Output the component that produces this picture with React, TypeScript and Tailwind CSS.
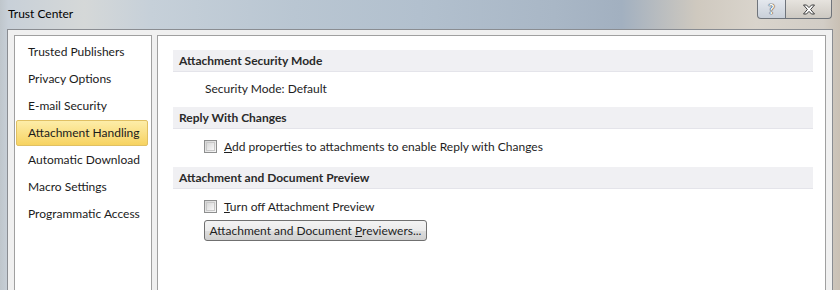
import React from "react";

const font = { fontFamily: "Lato, 'Noto Sans', 'Liberation Sans', sans-serif" };

function NavItem({ label, selected }: { label: string; selected?: boolean }) {
  return (
    <div
      className={
        "ml-[1px] mb-[1px] h-[26px] w-[132px] flex items-center pl-[11px] text-[12px] text-[#1b1b1b] rounded-[2px] border " +
        (selected
          ? "border-[#e0c063] bg-gradient-to-b from-[#fdeda8] to-[#f7d360]"
          : "border-transparent")
      }
    >
      {label}
    </div>
  );
}

function Bar({ title }: { title: string }) {
  return (
    <div className="h-[22px] bg-[#f0f0f3] border-b border-[#e4e4ea] flex items-center pl-[6px] text-[12px] font-bold text-[#2a2a2a]">
      {title}
    </div>
  );
}

function Checkbox() {
  return (
    <div className="w-[13px] h-[13px] border border-[#8e8f8f] bg-gradient-to-br from-[#d6d6d6] to-[#f6f6f6] p-[1px]">
      <div className="w-full h-full border border-[#c8c8c8] bg-gradient-to-br from-[#d8d8d8] to-[#f8f8f8]" />
    </div>
  );
}

export default function App() {
  return (
    <div
      className="w-[840px] h-[290px] overflow-hidden flex flex-col bg-[linear-gradient(90deg,#bfc6cc_0%,#c8d0d8_1%,#d5d8d8_10%,#c6d0d9_18%,#b9c6d2_35%,#b2c0ce_50%,#a9b7c6_66%,#a2b0c0_74%,#cfc9bf_83%,#d9d4cc_90%,#d2cdc6_98%,#c9c0b4_100%)]"
      style={font}
    >
      {/* Title bar */}
      <div className="h-[29px] flex items-start justify-between shrink-0">
        <div className="pl-[8px] pt-[6px] text-[12px] text-black leading-[16px]">Trust Center</div>
        <div className="flex mr-[8px]">
          <div className="w-[29px] h-[19px] border border-[#6f747b] border-t-0 rounded-bl-[4px] bg-gradient-to-b from-[#e4e8ee] to-[#c9d0d9] flex items-center justify-center">
            <span
              className="text-[13px] font-bold text-white leading-none"
              style={{ textShadow: "0 0 1px #3a3a3a, 0 0 1px #3a3a3a, 0 0 1px #3a3a3a" }}
            >
              ?
            </span>
          </div>
          <div className="w-[46px] h-[19px] border border-[#6f747b] border-t-0 border-l-0 rounded-br-[4px] bg-gradient-to-b from-[#e6e3de] to-[#cdc9c2] flex items-center justify-center">
            <svg width="14" height="11" viewBox="0 0 14 11">
              <path
                d="M1.5 1 L4.5 1 L7 3.6 L9.5 1 L12.5 1 L8.6 5.5 L12.5 10 L9.5 10 L7 7.4 L4.5 10 L1.5 10 L5.4 5.5 Z"
                fill="#ffffff"
                stroke="#3c3c3c"
                strokeWidth="1"
                strokeLinejoin="round"
              />
            </svg>
          </div>
        </div>
      </div>

      {/* Client area */}
      <div className="flex-1 mx-[7px] border border-b-0 border-[#8a8d92] bg-[#f0f0f0] pt-[5px] pl-[6px] pr-[6px] flex gap-[5px]">
        {/* Left nav */}
        <div className="w-[138px] border border-[#a0a0a0] bg-white pt-[3px] shrink-0 h-[300px]">
          <NavItem label="Trusted Publishers" />
          <NavItem label="Privacy Options" />
          <NavItem label="E-mail Security" />
          <NavItem label="Attachment Handling" selected />
          <NavItem label="Automatic Download" />
          <NavItem label="Macro Settings" />
          <NavItem label="Programmatic Access" />
        </div>

        {/* Right panel */}
        <div className="flex-1 border border-[#a0a0a0] bg-white pt-[14px] pl-[15px] pr-[12px] h-[300px]">
          <Bar title="Attachment Security Mode" />
          <div className="h-[35px] pt-[9px] pl-[32px] text-[12px] leading-[16px] text-[#1e1e1e]">
            Security Mode: Default
          </div>
          <Bar title="Reply With Changes" />
          <div className="h-[38px] pt-[10px] pl-[31px] flex items-start gap-[7px] text-[12px] leading-[16px] text-[#1e1e1e]">
            <div className="pt-[1px]">
              <Checkbox />
            </div>
            <span>
              <span className="underline">A</span>dd properties to attachments to enable Reply with Changes
            </span>
          </div>
          <Bar title="Attachment and Document Preview" />
          <div className="pt-[10px] pl-[31px] flex items-start gap-[7px] text-[12px] leading-[16px] text-[#1e1e1e]">
            <div className="pt-[1px]">
              <Checkbox />
            </div>
            <span>
              <span className="underline">T</span>urn off Attachment Preview
            </span>
          </div>
          <div className="mt-[5px] ml-[31px] w-[223px] h-[21px] border border-[#707070] rounded-[3px] bg-[linear-gradient(180deg,#f3f3f3_0%,#ebebeb_50%,#dddddd_51%,#cfcfcf_100%)] flex items-center justify-center text-[12px] text-[#1e1e1e]">
            <span>
              Attachment and Document <span className="underline">P</span>reviewers...
            </span>
          </div>
        </div>
      </div>
    </div>
  );
}
